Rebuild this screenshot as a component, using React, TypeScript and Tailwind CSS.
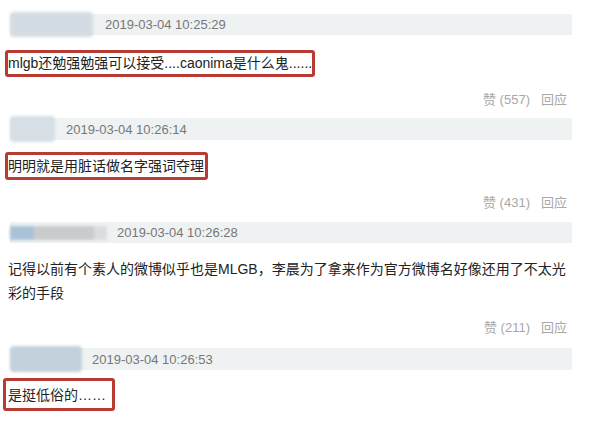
import React from "react";

const font = { fontFamily: '"Liberation Sans", "Noto Sans CJK SC", sans-serif' };

function Header({ ts, nameW, tsX, variant, className }: { ts: string; nameW: number; tsX: number; variant: number; className: string }) {
  return (
    <div className={`ml-[10px] w-[562px] bg-[#eff2f2] flex items-center relative ${className}`}>
      <div className="absolute left-0 top-[-2px] bottom-[-2px] flex blur-[1.5px]" style={{ width: nameW }}>
        {variant === 1 && <div className="w-full h-full bg-[#d3dce2] rounded-sm" />}
        {variant === 2 && <div className="w-full h-full bg-[#d6dfe5] rounded-sm" />}
        {variant === 3 && (
          <div className="w-full flex items-center">
            <div className="w-[24px] h-[14px] bg-[#a9c2d6]" />
            <div className="w-[60px] h-[14px] bg-[#c9cccc]" />
            <div className="flex-1 h-[14px] bg-[#dadddd]" />
          </div>
        )}
        {variant === 4 && <div className="w-full h-full bg-[#c3d1dc] rounded-sm" />}
      </div>
      <span className="absolute text-[13px] text-[#777] leading-none" style={{ left: tsX - 10 }}>
        {ts}
      </span>
    </div>
  );
}

function Likes({ n, className }: { n: string; className: string }) {
  return (
    <div className={`w-[567px] flex justify-end text-[13px] leading-[16px] text-[#a8a8a8] ${className}`}>
      <span>赞 ({n})</span>
      <span className="ml-[11px]">回应</span>
    </div>
  );
}

export default function App() {
  return (
    <div className="w-[591px] h-[421px] bg-white overflow-hidden flex flex-col pt-[14px]" style={font}>
      <Header ts="2019-03-04 10:25:29" nameW={83} tsX={105} variant={1} className="h-[21px]" />
      <div className="mt-[15px] ml-[5px] self-start h-[27px] border-[3px] border-[#b93b33] rounded-[3px] flex items-center text-[14px] text-[#222] whitespace-nowrap">
        <span>mlgb还勉强勉强可以接受....caonima是什么鬼......</span>
      </div>
      <Likes n="557" className="mt-[15px]" />
      <Header ts="2019-03-04 10:26:14" nameW={45} tsX={66} variant={2} className="h-[22px] mt-[10px]" />
      <div className="mt-[12px] ml-[5px] w-[203px] h-[28px] border-[3px] border-[#b93b33] rounded-[3px] flex items-center text-[14px] text-[#222] whitespace-nowrap">
        <span>明明就是用脏话做名字强词夺理</span>
      </div>
      <Likes n="431" className="mt-[15px]" />
      <Header ts="2019-03-04 10:26:28" nameW={97} tsX={117} variant={3} className="h-[21px] mt-[11px]" />
      <p className="mt-[14px] ml-[8px] w-[566px] text-[14px] leading-[24px] text-[#222]">
        记得以前有个素人的微博似乎也是MLGB，李晨为了拿来作为官方微博名好像还用了不太光彩的手段
      </p>
      <Likes n="211" className="mt-[15px]" />
      <Header ts="2019-03-04 10:26:53" nameW={72} tsX={92} variant={4} className="h-[22px] mt-[12px]" />
      <div className="mt-[8px] ml-[3px] w-[112px] h-[33px] border-[3px] border-[#b93b33] rounded-[3px] flex items-center text-[14px] text-[#222] whitespace-nowrap pt-[2px]">
        <span className="ml-[2px]">是挺低俗的……</span>
      </div>
    </div>
  );
}
